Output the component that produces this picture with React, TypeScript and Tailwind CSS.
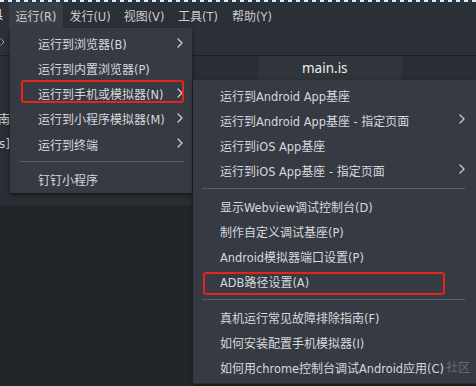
import React from "react";

const Chevron = () => (
  <svg width="6" height="10" viewBox="0 0 6 10" fill="none" className="shrink-0">
    <path d="M1 1 L5 5 L1 9" stroke="#c9ccd1" strokeWidth="1.3" strokeLinecap="round" strokeLinejoin="round" />
  </svg>
);

const Label = ({ text }: { text: string }) => {
  const parts = text.split(/([\u3000-\u9fff\uff00-\uffef]+)/);
  return (
    <span className="whitespace-nowrap">
      {parts.map((p, i) =>
        p === "" ? null : i % 2 === 1 ? (
          <span key={i} className="text-[12px]" style={{ fontFamily: '"Noto Sans CJK SC", sans-serif' }}>
            {p}
          </span>
        ) : (
          <span key={i} className="text-[11.4px]" style={{ fontFamily: '"DejaVu Sans", "Noto Sans", sans-serif' }}>
            {p}
          </span>
        )
      )}
    </span>
  );
};

type Item = { label: string; arrow?: boolean } | "sep";

const menu1: Item[] = [
  { label: "运行到浏览器(B)", arrow: true },
  { label: "运行到内置浏览器(P)" },
  { label: "运行到手机或模拟器(N)", arrow: true },
  { label: "运行到小程序模拟器(M)", arrow: true },
  { label: "运行到终端", arrow: true },
  "sep",
  { label: "钉钉小程序" },
];

const menu2: Item[] = [
  { label: "运行到Android App基座" },
  { label: "运行到Android App基座 - 指定页面", arrow: true },
  { label: "运行到iOS App基座" },
  { label: "运行到iOS App基座 - 指定页面", arrow: true },
  "sep",
  { label: "显示Webview调试控制台(D)" },
  { label: "制作自定义调试基座(P)" },
  { label: "Android模拟器端口设置(P)" },
  { label: "ADB路径设置(A)" },
  "sep",
  { label: "真机运行常见故障排除指南(F)" },
  { label: "如何安装配置手机模拟器(I)" },
  { label: "如何用chrome控制台调试Android应用(C)" },
];

export default function App() {
  const font = { fontFamily: '"Noto Sans CJK SC", "Noto Sans", sans-serif' };
  return (
    <div
      className="relative w-[476px] h-[386px] overflow-hidden bg-[#22252a] text-[#d6d8dc] flex flex-col"
      style={font}
    >
      {/* menu bar */}
      <div className="h-[28px] shrink-0 flex items-stretch bg-[#2b2f36] text-[#c9ccd1]">
        <div className="w-[9px] overflow-hidden flex items-center justify-end pr-[6px] text-[#e6e6e6] text-[12px]">
          <span className="whitespace-nowrap">具</span>
        </div>
        <div className="w-[54px] flex items-center justify-center bg-[#393e46]"><Label text="运行(R)" /></div>
        <div className="w-[54px] flex items-center justify-center"><Label text="发行(U)" /></div>
        <div className="w-[54px] flex items-center justify-center"><Label text="视图(V)" /></div>
        <div className="w-[54px] flex items-center justify-center"><Label text="工具(T)" /></div>
        <div className="w-[54px] flex items-center justify-center"><Label text="帮助(Y)" /></div>
      </div>

      {/* toolbar row */}
      <div className="h-[28px] shrink-0 flex bg-[#2c3037] border-b border-[#1c1e22]">
        <div className="w-[10px] flex items-center overflow-hidden">
          <svg width="5" height="8" viewBox="0 0 5 8" fill="none">
            <path d="M0.5 0.5 L4 4 L0.5 7.5" stroke="#9aa0a8" strokeWidth="1" />
          </svg>
        </div>
      </div>

      {/* tab row */}
      <div className="h-[24px] shrink-0 flex bg-[#2a2d33]">
        <div className="w-[258px]" />
        <div className="w-[144px] bg-[#30343b] flex items-center pl-[44px] text-[13.5px] text-[#eeeeee]" style={{ fontFamily: '"Noto Sans", sans-serif' }}>
          main.is
        </div>
      </div>

      {/* body */}
      <div className="flex-1 flex">
        <div className="w-[192px] flex flex-col">
          <div className="h-[112px] bg-[#2a2d33] flex flex-col pt-[26px] text-[12px] text-[#cfd2d6]">
            <div className="w-[10px] h-[25px] overflow-hidden flex justify-end items-center">
              <span className="whitespace-nowrap">指南</span>
            </div>
            <div className="w-[10px] h-[25px] overflow-hidden flex justify-end items-center">
              <span className="whitespace-nowrap" style={{ fontFamily: '"DejaVu Sans", sans-serif' }}>js]</span>
            </div>
          </div>
          <div className="h-[13px] bg-[#2a2d33]" />
          <div className="flex-1 bg-[#22252a]" />
        </div>
        <div className="flex-1 bg-[#282b31]" />
      </div>

      {/* top dashed selection edge */}
      <div className="absolute left-0 top-0 w-full h-[2px] bg-[repeating-linear-gradient(90deg,#dfe7ef_0px,#dfe7ef_4px,#1f3b5c_4px,#1f3b5c_8px)]" />

      {/* first dropdown */}
      <div className="absolute left-[10px] top-[28px] w-[182px] bg-[#363b43] pt-[3px] pb-[2px] shadow-[0_2px_4px_rgba(0,0,0,0.5)]">
        {menu1.map((it, i) =>
          it === "sep" ? (
            <div key={i} className="h-[10px] flex items-center pl-[10px] pr-[8px]">
              <div className="h-px w-full bg-[#5a5f67]" />
            </div>
          ) : (
            <div key={i} className="h-[25px] flex items-center justify-between pl-[28px] pr-[9px] pb-[2px]">
              <Label text={it.label} />
              {it.arrow && <Chevron />}
            </div>
          )
        )}
      </div>

      {/* submenu */}
      <div className="absolute left-[193px] top-[80px] w-[283px] h-[304px] bg-[#363b43] pt-[2.5px] shadow-[0_2px_4px_rgba(0,0,0,0.5)] border-b border-[#2a2d33]">
        {menu2.map((it, i) =>
          it === "sep" ? (
            <div key={i} className="h-[11px] flex items-center pl-[9px] pr-[11px]">
              <div className="h-px w-full bg-[#5a5f67]" />
            </div>
          ) : (
            <div key={i} className="h-[25px] flex items-center justify-between pl-[27px] pr-[11px] pb-[2px]">
              <Label text={it.label} />
              {it.arrow && <Chevron />}
            </div>
          )
        )}
      </div>

      {/* annotations */}
      <div className="absolute left-[21px] top-[80px] w-[163px] h-[23px] border-2 border-[#e3261c] rounded-[3px]" />
      <div className="absolute left-[203px] top-[272px] w-[242px] h-[23px] border-2 border-[#e3261c] rounded-[3px]" />
      <span className="absolute left-[446px] top-[358px] text-[12px] text-[#7b8088] opacity-70">社区</span>
    </div>
  );
}
